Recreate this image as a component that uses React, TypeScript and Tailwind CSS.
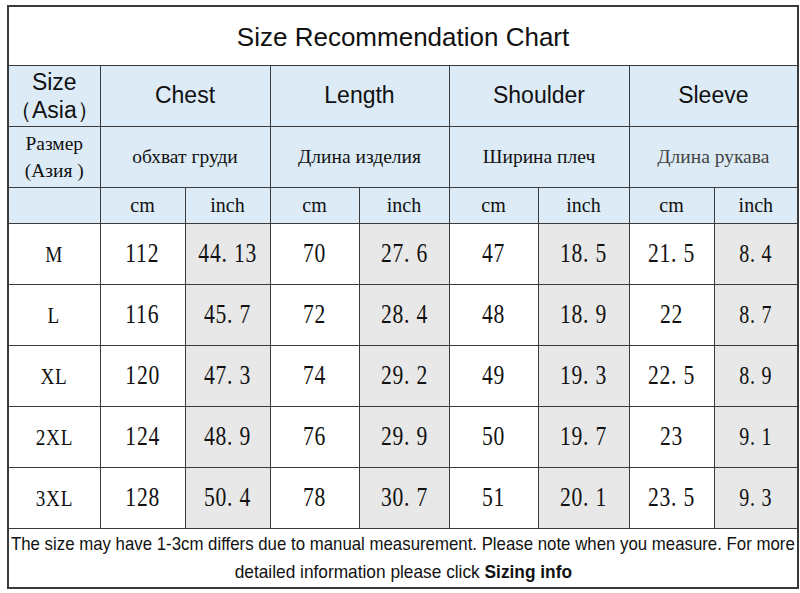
import React from "react";

const widths = [92, 85, 85, 89, 90, 89, 91, 85, 84];

const rows = [
  ["M", "112", "44.13", "70", "27.6", "47", "18.5", "21.5", "8.4"],
  ["L", "116", "45.7", "72", "28.4", "48", "18.9", "22", "8.7"],
  ["XL", "120", "47.3", "74", "29.2", "49", "19.3", "22.5", "8.9"],
  ["2XL", "124", "48.9", "76", "29.9", "50", "19.7", "23", "9.1"],
  ["3XL", "128", "50.4", "78", "30.7", "51", "20.1", "23.5", "9.3"],
];

const heads = ["Chest", "Length", "Shoulder", "Sleeve"];
const ru = ["обхват груди", "Длина изделия", "Ширина плеч", "Длина рукава"];

const cell = "border border-[#3a3a3a] text-center align-middle p-0";
const blue = "bg-[#ddebf7]";

export default function App() {
  return (
    <div className="w-[800px] h-[593px] bg-white pt-[5px] pl-[7px]">
      <table className="table-fixed border-collapse w-[790px] border-2 border-[#3a3a3a] text-[#111]">
        <colgroup>
          {widths.map((w, i) => (
            <col key={i} style={{ width: w }} />
          ))}
        </colgroup>
        <tbody>
          <tr className="h-[59px]">
            <td colSpan={9} className={`${cell} pt-[3px] text-[26px] font-['Liberation_Sans',Arial,sans-serif]`}>
              Size Recommendation Chart
            </td>
          </tr>
          <tr className="h-[61px] font-['Liberation_Sans',Arial,sans-serif] text-[23px]">
            <td className={`${cell} ${blue} leading-[28px]`}>
              <div>Size</div>
              <div>（Asia）</div>
            </td>
            {heads.map((h) => (
              <td key={h} colSpan={2} className={`${cell} ${blue}`}>
                {h}
              </td>
            ))}
          </tr>
          <tr className="h-[61px] font-['Liberation_Serif','Times_New_Roman',serif] text-[19.5px]">
            <td className={`${cell} ${blue} leading-[27px]`}>
              <div>Размер</div>
              <div>(Азия )</div>
            </td>
            {ru.map((h, i) => (
              <td key={h} colSpan={2} className={`${cell} ${blue} ${i === 3 ? "text-[#444]" : ""}`}>
                {h}
              </td>
            ))}
          </tr>
          <tr className="h-[36px] font-['Liberation_Serif','Times_New_Roman',serif] text-[20px]">
            <td className={`${cell} ${blue}`}></td>
            {heads.map((h) => (
              <React.Fragment key={h}>
                <td className={`${cell} ${blue}`}>cm</td>
                <td className={`${cell} ${blue}`}>inch</td>
              </React.Fragment>
            ))}
          </tr>
          {rows.map((r) => (
            <tr key={r[0]} className="h-[61px] font-['Liberation_Serif','Times_New_Roman',serif] text-[27px]">
              {r.map((v, i) => (
                <td
                  key={i}
                  className={`${cell} ${i > 0 && i % 2 === 0 ? "bg-[#e8e8e8]" : "bg-white"} ${i === 0 ? "text-[24px]" : ""} ${i === 8 ? "text-[25px]" : ""}`}
                >
                  <span className="inline-block scale-x-[0.8] tracking-[1px]">{v.replace(".", ". ")}</span>
                </td>
              ))}
            </tr>
          ))}
          <tr className="h-[60px]">
            <td colSpan={9} className={`${cell} text-[19px] font-['Liberation_Sans',Arial,sans-serif] leading-[28px] overflow-hidden`}>
              <div className="flex justify-center whitespace-nowrap">
                <span className="shrink-0 scale-x-[0.885]">
                  The size may have 1-3cm differs due to manual measurement. Please note when you measure. For more
                </span>
              </div>
              <div className="flex justify-center whitespace-nowrap">
                <span className="shrink-0 scale-x-[0.91]">
                  detailed information please click <b className="font-bold">Sizing info</b>
                </span>
              </div>
            </td>
          </tr>
        </tbody>
      </table>
    </div>
  );
}
